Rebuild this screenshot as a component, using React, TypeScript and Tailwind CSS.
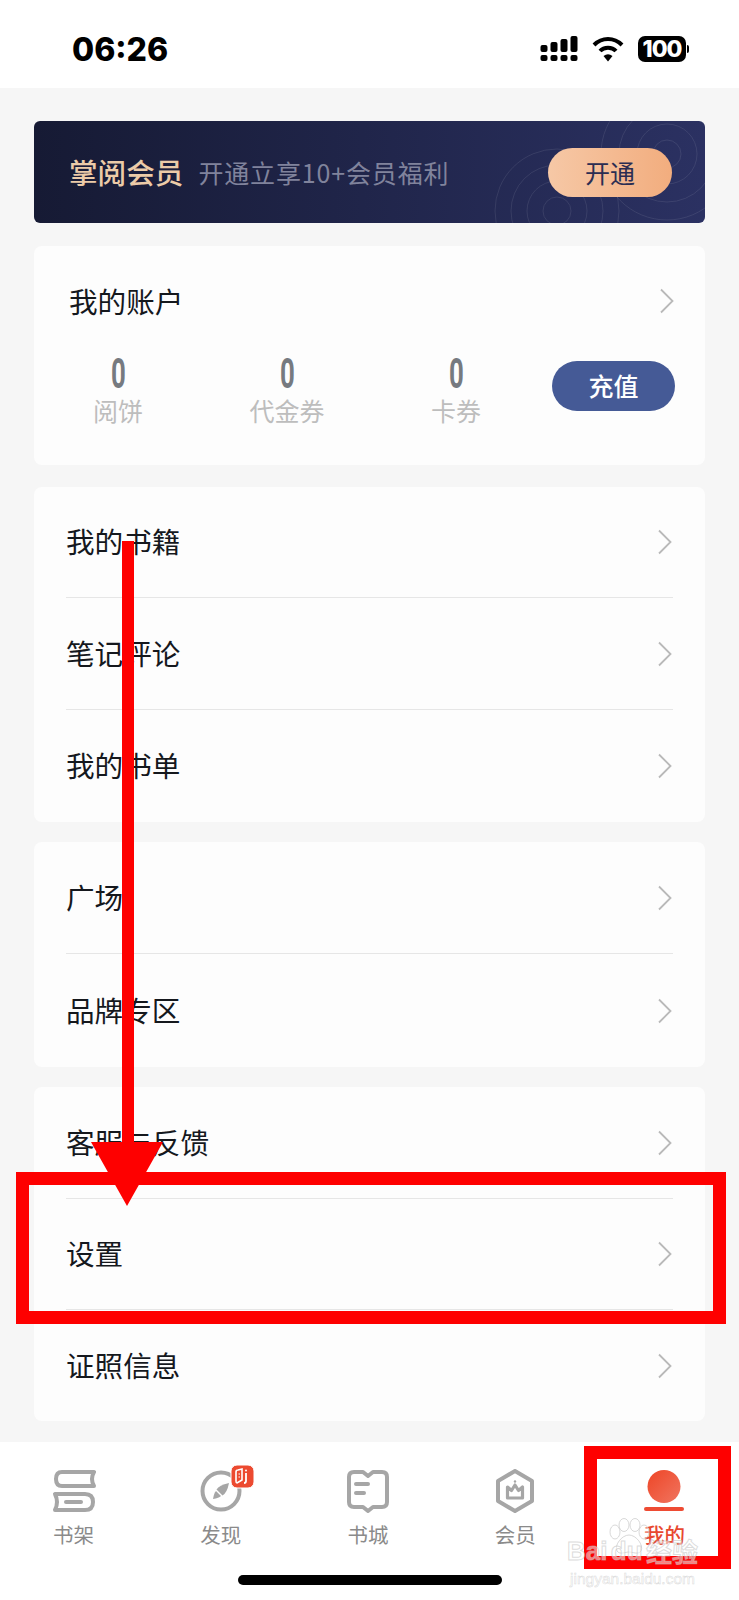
import React from "react";

const cjk = { fontFamily: '"Noto Sans CJK SC", "Noto Sans", sans-serif' };

function Chevron() {
  return (
    <svg width="16" height="26" viewBox="0 0 16 26" fill="none" className="shrink-0">
      <path d="M2 1.5 L13.5 13 L2 24.5" stroke="#b9b9b9" strokeWidth="1.8" />
    </svg>
  );
}

function Row({ label, last, h }: { label: string; last?: boolean; h: string }) {
  return (
    <div className={`flex items-center justify-between ${h} ${last ? "" : "border-b border-[#e6e6e6]"}`}>
      <span className="pb-[1px] text-[28.6px] leading-none text-[#15181d]">{label}</span>
      <Chevron />
    </div>
  );
}

function Stat({ label, cls }: { label: string; cls: string }) {
  return (
    <div className={`flex flex-col items-center ${cls}`}>
      <span className="h-[38px] text-[43px] leading-[38px] font-bold text-[#767a80] scale-x-[0.6]" style={{ fontFamily: "Roboto, sans-serif" }}>
        0
      </span>
      <span className="mt-[3px] text-[25px] leading-[30px] text-[#bdbdbd]">{label}</span>
    </div>
  );
}

function Tab({ label, active, children }: { label: string; active?: boolean; children: React.ReactNode }) {
  return (
    <div className={`flex flex-col items-center ${active ? "ml-[4px]" : ""}`}>
      <div className="relative h-[44px] w-[44px]">{children}</div>
      <span className={`mt-[9px] text-[20.5px] leading-[24px] ${active ? "text-[#e8482f] font-medium" : "text-[#8a8a8a]"}`}>{label}</span>
    </div>
  );
}

export default function App() {
  return (
    <div className="relative flex h-[1600px] w-[739px] flex-col overflow-hidden bg-[#f6f6f6]" style={cjk}>
      {/* status bar */}
      <div className="flex h-[88px] shrink-0 items-start justify-between bg-white pl-[72px] pr-[50px] pt-[30px]">
        <span className="text-[32px] leading-[40px] font-extrabold text-black" style={{ fontFamily: "Inter, sans-serif" }}>
          06:26
        </span>
        <div className="flex items-center gap-[14px] pt-[6px]">
          <svg width="38" height="26" viewBox="0 0 38 26" fill="black">
            <rect x="0.5" y="9" width="7" height="7" rx="2" />
            <rect x="0.5" y="19" width="7" height="6" rx="2" />
            <rect x="10.5" y="6" width="7" height="10" rx="2" />
            <rect x="10.5" y="19" width="7" height="6" rx="2" />
            <rect x="20.5" y="3" width="7" height="13" rx="2" />
            <rect x="20.5" y="19" width="7" height="6" rx="2" />
            <rect x="30.5" y="0" width="7" height="16" rx="2" />
            <rect x="30.5" y="19" width="7" height="6" rx="2" />
          </svg>
          <svg width="32" height="26" viewBox="0 0 32 26" fill="none" stroke="black" strokeWidth="4">
            <path d="M2 9 C10 1 22 1 30 9" />
            <path d="M8 15 C12 10.5 20 10.5 24 15" />
            <path d="M11.5 20 L16 25.5 L20.5 20 Q16 16.5 11.5 20 Z" fill="black" stroke="none" />
          </svg>
          <div className="flex items-center">
            <div className="flex h-[26px] w-[48px] items-center justify-center rounded-[7px] bg-black text-[23px] font-extrabold tracking-[-1px] text-white" style={{ fontFamily: "Inter, sans-serif" }}>
              100
            </div>
            <div className="ml-[1px] h-[8px] w-[2px] rounded-r bg-black" />
          </div>
        </div>
      </div>

      <div className="flex flex-1 flex-col px-[34px]">
        {/* banner */}
        <div className="relative mt-[33px] flex h-[102px] items-center overflow-hidden rounded-[6px] bg-gradient-to-r from-[#161a34] to-[#2b3162] pl-[35px]">
          <svg className="absolute left-0 top-0" width="671" height="102" fill="none" stroke="#ffffff" strokeOpacity="0.09">
            <circle cx="633" cy="33" r="14" />
            <circle cx="633" cy="33" r="30" />
            <circle cx="633" cy="33" r="48" />
            <circle cx="633" cy="33" r="66" />
            <circle cx="523" cy="90" r="14" />
            <circle cx="523" cy="90" r="30" />
            <circle cx="523" cy="90" r="46" />
            <circle cx="523" cy="90" r="62" />
          </svg>
          <span className="relative text-[28.6px] leading-none font-medium text-[#eccba8]">掌阅会员</span>
          <span className="relative ml-[15px] text-[25px] leading-none tracking-[0.85px] text-[#80839c]">开通立享10+会员福利</span>
          <div className="absolute left-[514px] top-[27px] flex h-[49px] w-[124px] items-center justify-center rounded-full bg-gradient-to-r from-[#f6c8a6] to-[#f2ad7e] text-[25px] text-[#2b2d52]">
            开通
          </div>
        </div>

        {/* account */}
        <div className="mt-[23px] h-[219px] rounded-[8px] bg-[#fdfdfd] pl-[36px] pr-[30px] pt-[38px]">
          <div className="flex items-center justify-between">
            <span className="-ml-[1px] text-[28.6px] leading-[34px] text-[#15181d]">我的账户</span>
            <Chevron />
          </div>
          <div className="mt-[36px] flex items-start">
            <Stat label="阅饼" cls="w-[96px]" />
            <Stat label="代金券" cls="w-[96px] ml-[73px]" />
            <Stat label="卡券" cls="w-[96px] ml-[73px]" />
            <div className="ml-[48px] mt-[7px] flex h-[50px] w-[123px] items-center justify-center rounded-full bg-[#455a96] text-[25px] font-medium text-white">
              充值
            </div>
          </div>
        </div>

        <div className="mt-[22px] rounded-[8px] bg-[#fdfdfd] px-[32px]">
          <Row label="我的书籍" h="h-[111px]" />
          <Row label="笔记评论" h="h-[112px]" />
          <Row label="我的书单" h="h-[112px]" last />
        </div>

        <div className="mt-[20px] rounded-[8px] bg-[#fdfdfd] px-[32px]">
          <Row label="广场" h="h-[112px]" />
          <Row label="品牌专区" h="h-[113px]" last />
        </div>

        <div className="mt-[20px] rounded-[8px] bg-[#fdfdfd] px-[32px]">
          <Row label="客服与反馈" h="h-[112px]" />
          <Row label="设置" h="h-[111px]" />
          <Row label="证照信息" h="h-[111px]" last />
        </div>
      </div>

      {/* tab bar */}
      <div className="h-[158px] shrink-0 bg-white pt-[27px]">
        <div className="grid grid-cols-5 pr-[3px]">
          <Tab label="书架">
            <svg width="44" height="44" viewBox="0 0 44 44" fill="none" stroke="#a6a6a6" strokeWidth="4">
              <path d="M42 3 H10 Q4 3 4 10 Q4 17 10 17 H42 Q38 10 42 3 Z" strokeLinejoin="round" />
              <path d="M3 25 H33 Q41 25 41 33 Q41 41 33 41 H3 Q7 33 3 25 Z" strokeLinejoin="round" />
              <path d="M14 33 H29" strokeLinecap="round" />
            </svg>
          </Tab>
          <Tab label="发现">
            <svg className="overflow-visible" width="44" height="44" viewBox="0 0 44 44" fill="none">
              <circle cx="22" cy="22" r="18.5" stroke="#a6a6a6" strokeWidth="4" />
              <path d="M30 14 Q28 24 23.5 26.5 L17.5 20.5 Q20 16 30 14 Z" fill="#a6a6a6" />
              <path d="M14 30 Q15 24 17 22 L22 27 Q20 29 14 30 Z" fill="#a6a6a6" />
              <rect x="32" y="-4" width="23" height="23" rx="6" fill="#ec4a30" stroke="#ffffff" strokeWidth="1" />
              <path d="M37 3 Q37 1 39 1 L43 0 V11 L38 14 Q37 14 37 12 Z" stroke="#fff" strokeWidth="1.6" />
              <path d="M39.5 5 H41 M39.5 8 H41" stroke="#fff" strokeWidth="1.2" />
              <path d="M47 4 V12 Q47 14 45 14" stroke="#fff" strokeWidth="1.8" />
              <circle cx="47" cy="1.5" r="1" fill="#fff" />
            </svg>
          </Tab>
          <Tab label="书城">
            <svg width="44" height="44" viewBox="0 0 44 44" fill="none" stroke="#a6a6a6" strokeWidth="4" strokeLinejoin="round">
              <path d="M8 3 H17 L22 7 L27 3 H36 Q41 3 41 8 V33 Q41 38 36 38 H27 L22 42 L17 38 H8 Q3 38 3 33 V8 Q3 3 8 3 Z" />
              <path d="M10 15 H22 M10 24 H18" strokeLinecap="round" />
            </svg>
          </Tab>
          <Tab label="会员">
            <svg width="44" height="44" viewBox="0 0 44 44" fill="none" stroke="#a6a6a6" strokeWidth="4" strokeLinejoin="round">
              <path d="M22 2 L39 12 V32 L22 42 L5 32 V12 Z" />
              <path d="M14.5 18 L18.5 21.5 L22 16 L25.5 21.5 L29.5 18 V29 H14.5 Z" strokeWidth="3.2" />
              <circle cx="22" cy="12.5" r="1.2" fill="#a6a6a6" stroke="none" />
            </svg>
          </Tab>
          <Tab label="我的" active>
            <svg width="44" height="44" viewBox="0 0 44 44">
              <defs>
                <linearGradient id="me" x1="0" y1="0" x2="1" y2="1">
                  <stop offset="0" stopColor="#ee4526" />
                  <stop offset="1" stopColor="#f07560" />
                </linearGradient>
              </defs>
              <circle cx="22" cy="17.5" r="16.5" fill="url(#me)" />
              <rect x="2" y="38" width="40" height="4" rx="2" fill="#ee4b33" />
            </svg>
          </Tab>
        </div>
      </div>

      {/* home indicator */}
      <div className="absolute left-[238px] top-[1575px] h-[10px] w-[264px] rounded-full bg-black" />

      {/* annotation: arrow */}
      <svg className="absolute left-0 top-0" width="739" height="1600" fill="#fe0000">
        <rect x="122" y="541" width="12" height="610" />
        <path d="M91 1142 H163 L127 1206 Z" />
      </svg>
      {/* annotation: boxes */}
      <div className="absolute left-[16px] top-[1172px] h-[152px] w-[710px] border-[13px] border-[#fe0000]" />
      <div className="absolute left-[584px] top-[1446px] h-[123px] w-[147px] border-[13px] border-[#fe0000]" />

      {/* watermark */}
      <svg className="absolute left-[608px] top-[1518px]" width="42" height="38" fill="#ffffff" fillOpacity="0.35" stroke="#c8c8c8" strokeOpacity="0.7">
        <ellipse cx="7" cy="14" rx="5" ry="7" />
        <ellipse cx="16" cy="7" rx="5" ry="6.5" />
        <ellipse cx="27" cy="7" rx="5" ry="6.5" />
        <ellipse cx="36" cy="14" rx="5" ry="7" />
        <path d="M21 17 C28 17 36 27 33 33 C30 37 25 34 21 34 C17 34 12 37 9 33 C6 27 14 17 21 17 Z" />
      </svg>
      <div className="absolute left-[567px] top-[1539px] w-[131px]" style={{ fontFamily: '"Liberation Sans", sans-serif' }}>
        <div className="flex items-center justify-between text-[26px] leading-[24px] font-bold text-white/50 [-webkit-text-stroke:1px_rgba(190,190,190,0.55)]">
          <span>Bai</span>
          <span>du</span>
          <span style={cjk}>经验</span>
        </div>
        <div className="mt-[7px] text-center text-[15.5px] leading-[17px] text-white/50 [-webkit-text-stroke:0.5px_rgba(190,190,190,0.6)]">jingyan.baidu.com</div>
      </div>
    </div>
  );
}
